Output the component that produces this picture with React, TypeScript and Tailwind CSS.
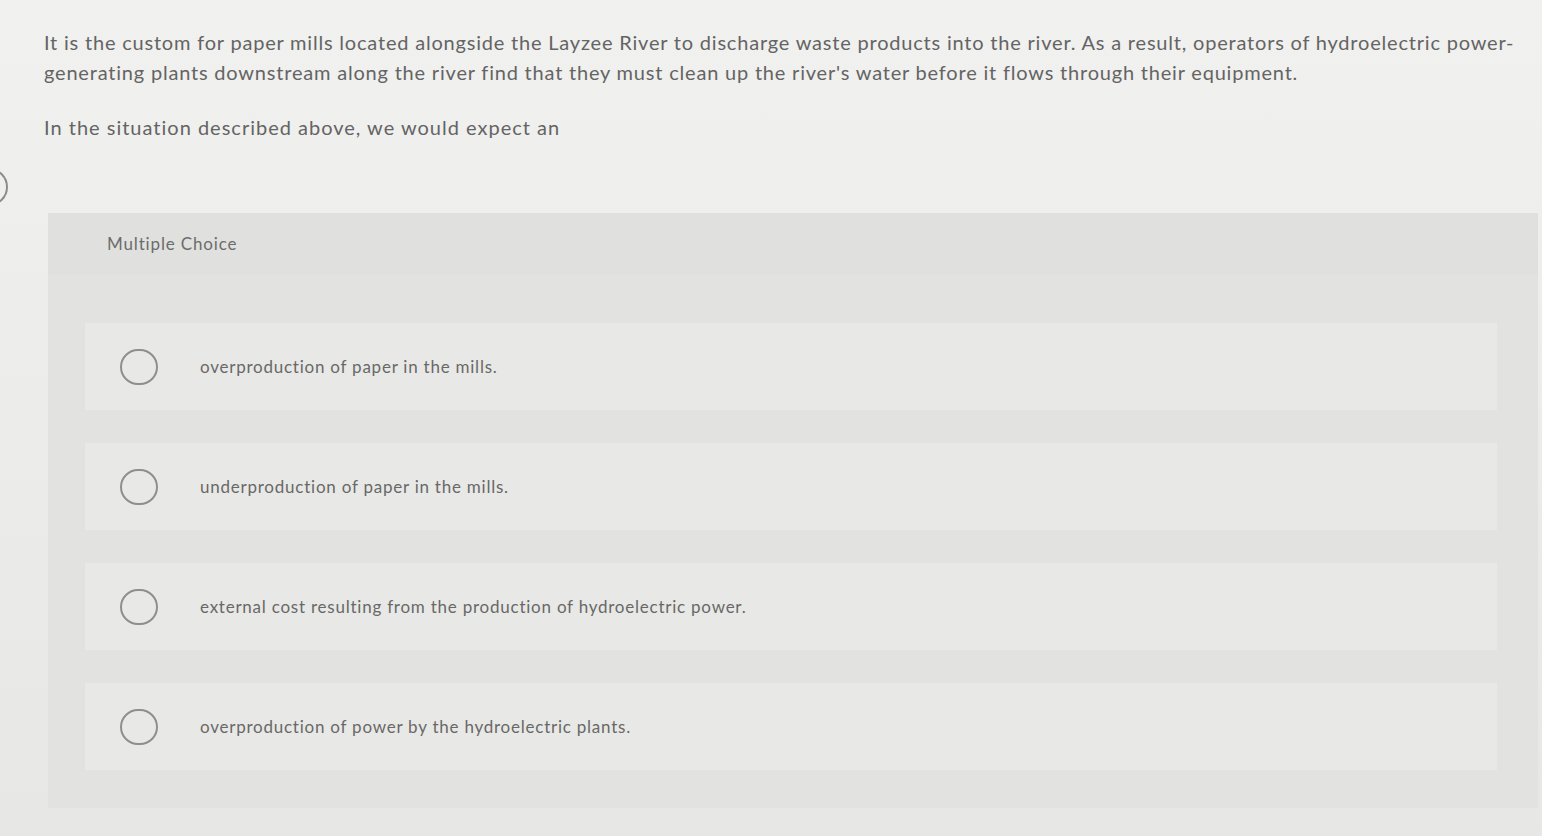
const options = [
  "overproduction of paper in the mills.",
  "underproduction of paper in the mills.",
  "external cost resulting from the production of hydroelectric power.",
  "overproduction of power by the hydroelectric plants.",
];

export default function App() {
  return (
    <div
      className="relative h-[836px] w-full overflow-hidden bg-gradient-to-b from-[#f1f1ef] via-[#ececea] to-[#e7e7e5] text-[#646464]"
      style={{ fontFamily: "Lato, 'Open Sans', sans-serif" }}
    >
      {/* cut-off control on the left edge */}
      <div className="absolute left-[-30px] top-[168px] h-[38px] w-[38px] rounded-full border-[2px] border-[#8c8c8c]" />

      {/* Question */}
      <div className="pl-[44px] pr-[4px] pt-[27px]">
        <p className="whitespace-nowrap text-[20px] leading-[30px] tracking-[0.04em]">
          It is the custom for paper mills located alongside the Layzee River to discharge waste products into the river. As a
          result, operators of hydroelectric power-
          <br />
          generating plants downstream along the river find that they must clean up the river's water before it flows through
          their equipment.
        </p>
        <p className="mt-[25px] text-[20px] leading-[30px] tracking-[0.05em]">In the situation described above, we would expect an</p>
      </div>

      {/* Multiple choice panel */}
      <div className="ml-[48px] mr-[4px] mt-[71px] bg-[#e2e2e0]">
        <div className="flex h-[62px] items-center bg-[#e0e0de] pl-[59px] text-[17px] tracking-[0.05em] text-[#6c6c6c]">
          Multiple Choice
        </div>
        <div className="flex flex-col gap-[33px] pb-[38px] pl-[37px] pr-[41px] pt-[48px]">
          {options.map((opt, i) => (
            <div key={i} className="flex h-[87px] items-center bg-[#e8e8e6] pl-[35px]">
              <div className="h-[36px] w-[38px] shrink-0 rounded-full border-[2px] border-[#8e8e8e]" />
              <span className="ml-[42px] text-[17px] tracking-[0.045em] text-[#686868]">{opt}</span>
            </div>
          ))}
        </div>
      </div>
    </div>
  );
}
